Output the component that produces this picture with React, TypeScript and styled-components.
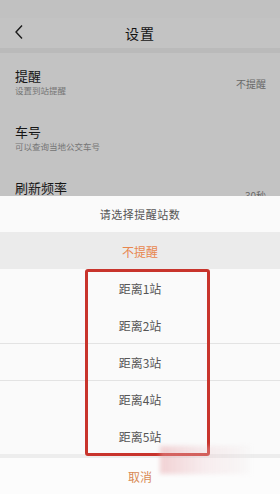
import styled, { createGlobalStyle } from 'styled-components';

const GlobalStyle = createGlobalStyle`
	html, body {
		margin: 0;
		padding: 0;
		background: #ffffff;
	}
	body {
		font-family: 'Noto Sans CJK SC', 'Noto Sans', sans-serif;
	}
`;

const settings = [
	{ title: '提醒', sub: '设置到站提醒', value: '不提醒' },
	{ title: '车号', sub: '可以查询当地公交车号', value: '' },
	{ title: '刷新频率', sub: '', value: '30秒' },
];

const options = [
	{ label: '距离1站', divided: false },
	{ label: '距离2站', divided: false },
	{ label: '距离3站', divided: true },
	{ label: '距离4站', divided: true },
	{ label: '距离5站', divided: false },
];

const App = () => {
	return (
		<Screen>
			<GlobalStyle />
			<StatusBar />
			<Header>
				<BackIcon width="10" height="16" viewBox="0 0 10 16">
					<path
						d="M8 1.5 L2 8 L8 14.5"
						fill="none"
						stroke="#222"
						strokeWidth="1.4"
					/>
				</BackIcon>
				<Title>设置</Title>
			</Header>
			<Gap />
			<List>
				{settings.map((s) => (
					<Row key={s.title}>
						<div>
							<RowTitle>{s.title}</RowTitle>
							<RowSub>{s.sub}</RowSub>
						</div>
						{s.value && <RowValue>{s.value}</RowValue>}
					</Row>
				))}
			</List>
			<Dim />
			<Sheet>
				<SheetTitle>请选择提醒站数</SheetTitle>
				<Option $active>不提醒</Option>
				{options.map((o) => (
					<Option key={o.label} $divided={o.divided}>
						{o.label}
					</Option>
				))}
				<SheetGap />
				<Cancel>取消</Cancel>
				<Highlight />
				<Watermark />
			</Sheet>
		</Screen>
	);
};

const Screen = styled.div`
	position: relative;
	width: 280px;
	height: 494px;
	overflow: hidden;
	background: #f2f2f2;
`;

const StatusBar = styled.div`
	height: 18px;
	background: #fdfdfd;
`;

const Header = styled.div`
	position: relative;
	height: 30px;
	display: flex;
	align-items: center;
	justify-content: center;
	background: #ffffff;
`;

const BackIcon = styled.svg`
	position: absolute;
	left: 14px;
	top: 6px;
`;

const Title = styled.div`
	font-size: 14px;
	line-height: 26px;
	color: #1a1a1a;
	letter-spacing: 1px;
`;

const Gap = styled.div`
	height: 5px;
	background: #f4f4f4;
`;

const List = styled.div`
	background: #ffffff;
`;

const Row = styled.div`
	height: 56px;
	padding: 0 14px 0 15px;
	display: flex;
	align-items: center;
	justify-content: space-between;
	box-sizing: border-box;
`;

const RowTitle = styled.div`
	font-size: 13px;
	line-height: 17px;
	color: #1e1e1e;
`;

const RowSub = styled.div`
	font-size: 8.5px;
	line-height: 12px;
	min-height: 12px;
	color: #9a9a9a;
`;

const RowValue = styled.div`
	font-size: 10px;
	color: #8a8a8a;
	margin-top: 4px;
`;

const Dim = styled.div`
	position: absolute;
	inset: 0;
	background: rgba(0, 0, 0, 0.235);
`;

const Sheet = styled.div`
	position: absolute;
	left: 0;
	right: 0;
	bottom: 0;
	height: 298px;
	background: #fafafa;
	display: flex;
	flex-direction: column;
`;

const SheetTitle = styled.div`
	height: 36px;
	display: flex;
	align-items: center;
	justify-content: center;
	font-size: 11px;
	color: #555555;
	letter-spacing: 0.5px;
`;

const Option = styled.div<{ $active?: boolean; $divided?: boolean }>`
	height: 37px;
	display: flex;
	align-items: center;
	justify-content: center;
	box-sizing: border-box;
	font-size: 12px;
	color: ${(p) => (p.$active ? '#e8874f' : '#555555')};
	background: ${(p) => (p.$active ? '#ebebeb' : '#fafafa')};
	border-top: 1px solid ${(p) => (p.$divided ? '#e3e3e3' : 'transparent')};
`;

const SheetGap = styled.div`
	height: 4px;
	background: #ededed;
`;

const Cancel = styled.div`
	flex: 1;
	display: flex;
	align-items: center;
	justify-content: center;
	font-size: 12px;
	color: #d88a55;
	background: #fcfcfc;
`;

const Highlight = styled.div`
	position: absolute;
	left: 85px;
	top: 73px;
	width: 125px;
	height: 187px;
	box-sizing: border-box;
	border: 3px solid #c8342c;
	border-radius: 3px;
`;

const Watermark = styled.div`
	position: absolute;
	left: 160px;
	top: 250px;
	width: 90px;
	height: 28px;
	background: linear-gradient(
		90deg,
		rgba(230, 160, 165, 0.45),
		rgba(235, 200, 205, 0.3) 50%,
		rgba(240, 235, 235, 0.2)
	);
	filter: blur(2px);
`;

export default App;
